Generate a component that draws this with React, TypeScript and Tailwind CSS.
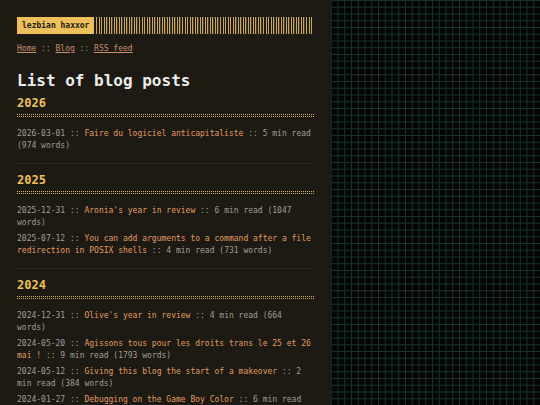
const years = [
  {
    year: "2026",
    posts: [
      { date: "2026-03-01", title: "Faire du logiciel anticapitaliste", min: 5, words: 974 },
    ],
  },
  {
    year: "2025",
    posts: [
      { date: "2025-12-31", title: "Aronia's year in review", min: 6, words: 1047 },
      {
        date: "2025-07-12",
        title: "You can add arguments to a command after a file redirection in POSIX shells",
        min: 4,
        words: 731,
      },
    ],
  },
  {
    year: "2024",
    posts: [
      { date: "2024-12-31", title: "Olive's year in review", min: 4, words: 664 },
      { date: "2024-05-20", title: "Agissons tous pour les droits trans le 25 et 26 mai !", min: 9, words: 1793 },
      { date: "2024-05-12", title: "Giving this blog the start of a makeover", min: 2, words: 384 },
      { date: "2024-01-27", title: "Debugging on the Game Boy Color", min: 6, words: 1205 },
    ],
  },
];

export default function App() {
  return (
    <div className="min-h-screen flex bg-[#040404] bg-[linear-gradient(to_right,#15342d_1px,transparent_1px),linear-gradient(to_bottom,#15342d_1px,transparent_1px)] bg-[size:6.75px_6.75px] font-['DejaVu_Sans_Mono',monospace]">
      <main className="w-[331px] shrink-0 bg-[#1c1a13] px-[17px] pt-[17px] pb-8 min-h-screen">
        {/* Header */}
        <div className="flex h-[17px]">
          <div className="bg-[#eec05b] text-[#1c1a13] text-[8px] font-bold leading-[17px] px-[5px]">
            lezbian haxxor
          </div>
          <div className="flex-1 ml-[2px] bg-[repeating-linear-gradient(90deg,#caa660_0_1px,#4a3f26_1px_1.4px,transparent_1.4px_2.53px)]" />
        </div>

        {/* Nav */}
        <nav className="mt-[9px] text-[8px] leading-[12px] text-[#8f8a80]">
          <a className="text-[#c98f6c] underline">Home</a> :: <a className="text-[#c98f6c] underline">Blog</a> ::{" "}
          <a className="text-[#c98f6c] underline">RSS feed</a>
        </nav>

        <h1 className="mt-[16px] text-[16px] leading-[20px] font-bold text-[#ececea]">List of blog posts</h1>

        {years.map((y, i) => (
          <section key={y.year}>
            {i > 0 && <div className="mt-[11px] h-px bg-[#2b2820]" />}
            <h2 className={`${i === 0 ? "mt-[4px]" : "mt-[8px]"} text-[12px] leading-[16px] font-bold text-[#eec05b]`}>
              {y.year}
            </h2>
            <div className="mt-[3px] h-[3px] border-y border-dotted border-[#d3b068]" />
            <ul className="mt-[11px] flex flex-col gap-[4px]">
              {y.posts.map((p) => (
                <li key={p.date} className="text-[8px] leading-[12px] text-[#a29d92]">
                  {p.date} :: <a className="text-[#e39a62]">{p.title}</a> :: {p.min} min read ({p.words} words)
                </li>
              ))}
            </ul>
          </section>
        ))}
      </main>
      <div className="flex-1" />
    </div>
  );
}
